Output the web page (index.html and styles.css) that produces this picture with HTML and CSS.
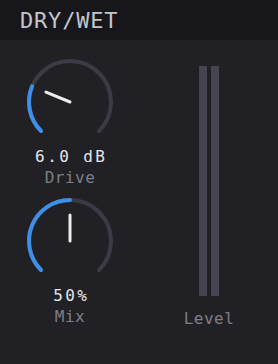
FILE: index.html
```html
<!DOCTYPE html>
<html>
<head>
<meta charset="utf-8">
<link rel="stylesheet" href="styles.css">
</head>
<body>
<div class="panel">
  <div class="header">DRY/WET</div>
  <div class="main">
    <div class="knobs">
      <div class="knob">
        <svg class="dial" width="90" height="90" viewBox="0 0 90 90">
          <path class="track" d="M16.01 73.99 A41 41 0 1 1 73.99 73.99"/>
          <path class="fill" d="M16.01 73.99 A41 41 0 0 1 7.12 29.31"/>
          <line class="pointer" x1="45" y1="45" x2="20.98" y2="35.05"/>
        </svg>
        <div class="value">6.0 dB</div>
        <div class="label">Drive</div>
      </div>
      <div class="knob">
        <svg class="dial" width="90" height="90" viewBox="0 0 90 90">
          <path class="track" d="M16.01 73.99 A41 41 0 1 1 73.99 73.99"/>
          <path class="fill" d="M16.01 73.99 A41 41 0 0 1 45 4"/>
          <line class="pointer" x1="45" y1="45" x2="45" y2="19"/>
        </svg>
        <div class="value">50%</div>
        <div class="label">Mix</div>
      </div>
    </div>
    <div class="meter">
      <div class="bars">
        <div class="bar"></div>
        <div class="bar"></div>
      </div>
      <div class="label meter-label">Level</div>
    </div>
  </div>
</div>
</body>
</html>
```

FILE: styles.css
```css
html, body {
  margin: 0;
  padding: 0;
  background: #212125;
}
body {
  font-family: "DejaVu Sans Mono", monospace;
  width: 278px;
  height: 364px;
  overflow: hidden;
}
.header {
  height: 40px;
  background: #17171b;
  display: flex;
  align-items: center;
  padding-left: 20px;
  font-size: 22px;
  letter-spacing: 0.8px;
  color: #c4c4cc;
}
.main {
  display: flex;
  padding-top: 17px;
}
.knobs {
  width: 140px;
  display: flex;
  flex-direction: column;
  align-items: center;
  gap: 9px;
}
.knob {
  display: flex;
  flex-direction: column;
  align-items: center;
}
.dial {
  display: block;
}
.track, .fill {
  fill: none;
  stroke-width: 4;
  stroke-linecap: round;
}
.track { stroke: #3b3b45; }
.fill { stroke: #3d8fe8; }
.pointer {
  stroke: #ececf0;
  stroke-width: 3;
  stroke-linecap: round;
}
.value {
  margin-top: 0;
  font-size: 16px;
  line-height: 19px;
  letter-spacing: 2.4px;
  margin-right: -2.4px;
  color: #e4e4ea;
}
.label {
  margin-top: 2px;
  font-size: 16px;
  line-height: 19px;
  letter-spacing: 0.5px;
  color: #7e7e88;
}
.meter {
  flex: 1;
  display: flex;
  flex-direction: column;
  align-items: center;
  padding-top: 9px;
}
.bars {
  display: flex;
  gap: 4px;
  height: 230px;
}
.bar {
  width: 8px;
  background: #45454f;
}
.meter-label {
  margin-top: 13px;
}
```
